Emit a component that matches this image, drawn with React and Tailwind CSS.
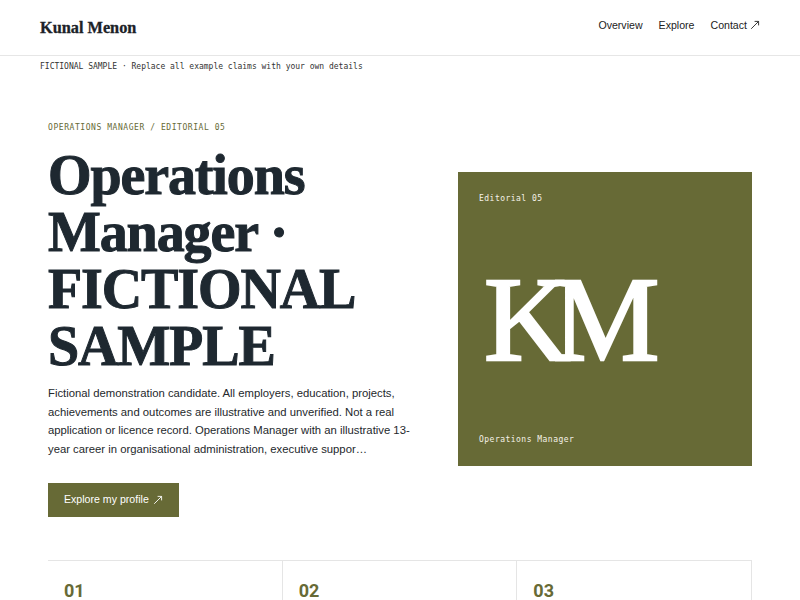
const serif = "font-['Liberation_Serif',Georgia,serif]";
const sans = "font-['Liberation_Sans',Arial,sans-serif]";
const mono = "font-['DejaVu_Sans_Mono',monospace]";

const Arrow = ({ className = "" }) => (
  <svg
    viewBox="0 0 10 10"
    width="10"
    height="10"
    fill="none"
    stroke="currentColor"
    strokeWidth="0.9"
    className={className}
  >
    <path d="M1.2 8.8 8.6 1.4M4.6 1.4h4v4" />
  </svg>
);

const Header = () => (
  <header className="h-[56px] border-b border-[#e6e6e6] px-10 flex items-center justify-between">
    <div className={`${serif} font-bold text-[16.3px] text-[#1c2228] mt-[1px] [-webkit-text-stroke:0.3px_#1c2228]`}>
      Kunal Menon
    </div>
    <nav className={`${sans} mb-[4px] flex items-center gap-4 text-[10.6px] text-[#222]`}>
      <a>Overview</a>
      <a>Explore</a>
      <a className="flex items-center gap-[3px]">
        Contact <Arrow />
      </a>
    </nav>
  </header>
);

const cards = ["01", "02", "03"];

export default function App() {
  return (
    <div className="min-h-screen bg-white">
      <Header />

      <div className={`${mono} px-10 pt-[5px] text-[8px] leading-[12px] text-[#333]`}>
        FICTIONAL SAMPLE · Replace all example claims with your own details
      </div>

      <main className="px-12 pt-[49px]">
        <section className="grid grid-cols-[1fr_294px] gap-x-[30px] items-center">
          <div>
            <p className={`${mono} text-[8px] leading-[12px] tracking-[0.07em] uppercase text-[#676a36]`}>
              Operations Manager / Editorial 05
            </p>
            <h1
              className={`${serif} mt-[13px] font-bold text-[56px] leading-[57px] tracking-[-0.02em] text-[#1e2830] [-webkit-text-stroke:1px_#1e2830]`}
            >
              Operations Manager · FICTIONAL SAMPLE
            </h1>
            <p className={`${sans} mt-[9px] text-[11.3px] leading-[18.7px] text-[#24282c]`}>
              Fictional demonstration candidate. All employers, education, projects, achievements and
              outcomes are illustrative and unverified. Not a real application or licence record.
              Operations Manager with an illustrative 13-year career in organisational administration,
              executive suppor…
            </p>
            <button
              className={`${sans} mt-[24px] h-[34px] px-4 flex items-center gap-[4px] bg-[#676a36] text-white text-[10.6px]`}
            >
              Explore my profile <Arrow />
            </button>
          </div>

          <div className="h-[294px] bg-[#676a36] px-[21px] pt-[21px] pb-[20px] flex flex-col justify-between text-[#f5f2e8]">
            <span className={`${mono} text-[8px] leading-[12px] tracking-[0.06em]`}>Editorial 05</span>
            <span
              className={`${serif} ml-[5px] text-[120px] leading-none tracking-[-0.15em] text-white [-webkit-text-stroke:2.5px_white]`}
            >
              KM
            </span>
            <span className={`${mono} text-[8px] leading-[12px] tracking-[0.06em]`}>Operations Manager</span>
          </div>
        </section>

        <section className="mt-[43px] grid grid-cols-3 border-t border-[#e5e5e5]">
          {cards.map((n) => (
            <div key={n} className="h-[160px] border-r border-[#e5e5e5] px-4 pt-[18px]">
              <div className="font-['Roboto',Arial,sans-serif] font-bold text-[18px] leading-[24px] text-[#676a36]">
                {n}
              </div>
            </div>
          ))}
        </section>
      </main>
    </div>
  );
}
